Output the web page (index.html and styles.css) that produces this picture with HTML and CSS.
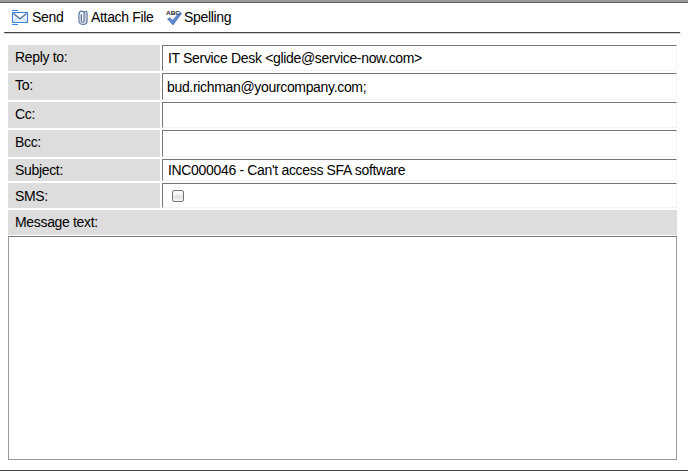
FILE: index.html
```html
<!DOCTYPE html>
<html lang="en">
<head>
<meta charset="utf-8">
<title>Email</title>
<link rel="stylesheet" href="styles.css">
</head>
<body>
<div class="window">
  <div class="toolbar">
    <a class="tool send"><svg width="17" height="16" viewBox="0 0 17 16">
      <path d="M0 .5h6M0 14.500h6" stroke="#3d82ee" fill="none"/>
      <rect x=".5" y="2.500" width="15" height="10" fill="#e4effa" stroke="#3d82d8"/>
      <path d="M1 12l5-4M15 12l-5-4" stroke="#b9d2ee" fill="none"/>
      <path d="M1.500 3.500L8 8.700l6.500-5.200" fill="#fff" stroke="#466b9c" stroke-width="1.200"/>
    </svg><span>Send</span></a>
    <a class="tool attach"><svg width="10" height="16" viewBox="0 0 10 16">
      <path d="M3.400 4.300v6.500c0 2 2.700 2 2.700 0V3.600C6.100.5 9 .6 9 3.600v7.300c0 4.600-8 4.600-8 0V4.500C1 .2 6.100.2 6.100 3.600" fill="none" stroke="#5f78a2" stroke-width="1.300"/>
      <path d="M2.200 4v7.200c0 2.500 5.200 2.500 5.200 0V3" fill="none" stroke="#aebdd3" stroke-width=".8"/>
    </svg><span>Attach File</span></a>
    <a class="tool spell"><svg width="17" height="16" viewBox="0 0 17 16">
      <path d="M1.500 9l2.300-1.300 2.600 2.600L14 2.200l1.500 1.300L7 15z" fill="#4878c8" stroke="#3c62ab" stroke-width=".5"/>
      <path d="M3 9.300l3.500 3L13.700 4" fill="none" stroke="#8baee7" stroke-width=".8"/>
      <text class="abc" x="0" y="5" textLength="14" lengthAdjust="spacingAndGlyphs">ABC</text>
    </svg><span>Spelling</span></a>
  </div>
  <div class="divider"></div>
  <div class="form">
    <div class="label">Reply to:</div><div class="field t-reply"><span>IT Service Desk &lt;glide@service-now.com&gt;</span></div>
    <div class="label">To:</div><div class="field t-to"><span>bud.richman@yourcompany.com;</span></div>
    <div class="label">Cc:</div><div class="field"></div>
    <div class="label">Bcc:</div><div class="field"></div>
    <div class="label subject">Subject:</div><div class="field t-subject"><span>INC000046 - Can't access SFA software</span></div>
    <div class="label sms">SMS:</div><div class="field t-sms"><i class="check"></i></div>
    <div class="label wide">Message text:</div>
  </div>
  <div class="message"></div>
</div>
</body>
</html>
```
FILE: styles.css
```css
* { box-sizing: border-box; }
body { margin: 0; background: #fff; color: #000; font: 14px/16px "Liberation Sans", Arial, sans-serif; letter-spacing: -.33px; }
.window { height: 471px; border-top: 2px solid #999; border-bottom: 1px solid #444; overflow: hidden; }
.window::before { content: ""; display: block; height: 1px; background: #666; }
.toolbar { display: flex; height: 29px; margin: 0 8px 0 4px; padding: 6px 0 0 8px; white-space: nowrap; }
.divider { height: 1px; margin: 0 8px 0 4px; background: #444; box-shadow: 1px 1px 0 #ccc; }
.tool { display: flex; height: 16px; }
.tool svg { flex: none; display: block; margin-top: 1px; }
.send { width: 66px; }
.send span { margin-left: 3px; }
.attach { width: 88px; }
.attach span { margin-left: 3px; }
.spell span { margin-left: 1px; }
.abc { font: bold 6px "Liberation Sans", sans-serif; letter-spacing: 0; fill: #222; }
.form { display: grid; grid-template-columns: 152px 515px; grid-template-rows: 26px 27px 26px 27px 22px 25px 25px; gap: 2px; margin: 12px 0 1px 8px; }
.label { background: #ddd; padding: 4px 7px 0; }
.subject { padding-top: 3px; }
.sms { padding-top: 5px; }
.wide { grid-column: 1 / 3; }
.field { border: 1px solid #f3f3f3; border-top-color: #777; border-left-color: #777; white-space: nowrap; }
.t-reply { padding: 4px 0 0 5px; }
.t-to { padding: 5px 0 0 4px; }
.t-subject { padding: 2px 0 0 5px; }
.t-sms { padding: 6px 0 0 9px; }
.check { display: block; width: 12px; height: 12px; border: 1px solid #777; border-radius: 2px; background: linear-gradient(#fff 0, #eee 45%, #ddd 50%, #f7f7f7); }
.message { width: 669px; height: 224px; margin-left: 8px; border: 1px solid #999; border-top-color: #777; }
```
